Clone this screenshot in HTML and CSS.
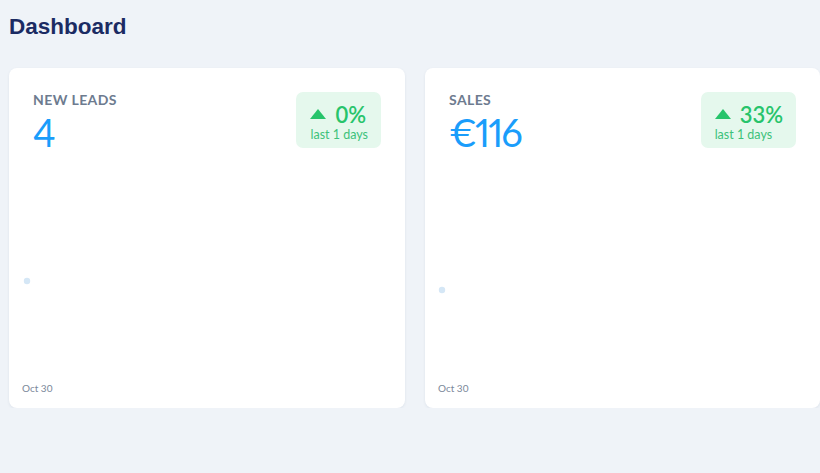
FILE: index.html
```html
<!DOCTYPE html>
<html>
<head>
<meta charset="utf-8">
<link rel="stylesheet" href="styles.css">
</head>
<body>
<main class="page">
  <h1 class="title">Dashboard</h1>
  <section class="cards">
    <article class="card">
      <div class="card-head">
        <div class="stat">
          <div class="label">New Leads</div>
          <div class="value">4</div>
        </div>
        <div class="badge">
          <div class="badge-top">
            <svg class="tri" width="16" height="10" viewBox="0 0 16 10"><path d="M8 0 L16 10 L0 10 Z" fill="#27c46b"/></svg>
            <span class="pct">0%</span>
          </div>
          <div class="badge-sub">last 1 days</div>
        </div>
      </div>
      <div class="chart">
        <svg class="plot" width="100%" height="100%"><circle cx="5" cy="133" r="3.2" fill="#d5e7f6"/></svg>
      </div>
      <div class="axis">Oct 30</div>
    </article>
    <article class="card">
      <div class="card-head">
        <div class="stat">
          <div class="label">Sales</div>
          <div class="value">€116</div>
        </div>
        <div class="badge">
          <div class="badge-top">
            <svg class="tri" width="16" height="10" viewBox="0 0 16 10"><path d="M8 0 L16 10 L0 10 Z" fill="#27c46b"/></svg>
            <span class="pct">33%</span>
          </div>
          <div class="badge-sub">last 1 days</div>
        </div>
      </div>
      <div class="chart">
        <svg class="plot" width="100%" height="100%"><circle cx="4" cy="142" r="3.2" fill="#d5e7f6"/></svg>
      </div>
      <div class="axis">Oct 30</div>
    </article>
  </section>
</main>
</body>
</html>
```
FILE: styles.css
```css
html, body {
  margin: 0;
  padding: 0;
  background: #eff3f8;
}
.page {
  padding: 12px 0 0 9px;
  font-family: Lato, "Noto Sans", sans-serif;
}
.title {
  margin: 0;
  font-family: "Liberation Sans", Arial, sans-serif;
  font-size: 22.5px;
  font-weight: 700;
  color: #1b2b63;
  line-height: 30px;
}
.cards {
  margin-top: 26px;
  display: grid;
  grid-template-columns: 396px 395px;
  column-gap: 20px;
}
.card {
  height: 340px;
  box-sizing: border-box;
  background: #fff;
  border-radius: 8px;
  box-shadow: 0 1px 3px rgba(30, 50, 90, 0.08);
  display: flex;
  flex-direction: column;
  padding: 24px 24px 14px 13px;
}
.card-head {
  display: flex;
  justify-content: space-between;
  align-items: flex-start;
  padding-left: 11px;
  height: 56px;
}
.label {
  font-size: 14px;
  font-weight: 700;
  letter-spacing: 0.4px;
  text-transform: uppercase;
  color: #6d7b8f;
  line-height: 16px;
}
.value {
  font-size: 38px;
  font-weight: 400;
  font-variant-numeric: proportional-nums;
  color: #1a9dfb;
  line-height: 44px;
  margin-top: 2px;
  letter-spacing: -2px;
}
.badge {
  box-sizing: border-box;
  height: 56px;
  background: #e5f8ed;
  border-radius: 7px;
  padding: 11px 13px 4px 14px;
  display: flex;
  flex-direction: column;
  align-items: flex-start;
}
.badge-top {
  display: flex;
  align-items: center;
  gap: 9px;
  height: 24px;
}
.tri {
  display: block;
  margin-top: -2px;
}
.pct {
  font-size: 22px;
  font-weight: 600;
  color: #27c46b;
  line-height: 24px;
}
.badge-sub {
  font-size: 12.5px;
  color: #3cc27a;
  line-height: 16px;
  margin-top: 0;
}
.chart {
  flex: 1;
  position: relative;
}
.plot {
  display: block;
}
.axis {
  font-size: 10px;
  color: #7b889a;
  line-height: 12px;
}
```
